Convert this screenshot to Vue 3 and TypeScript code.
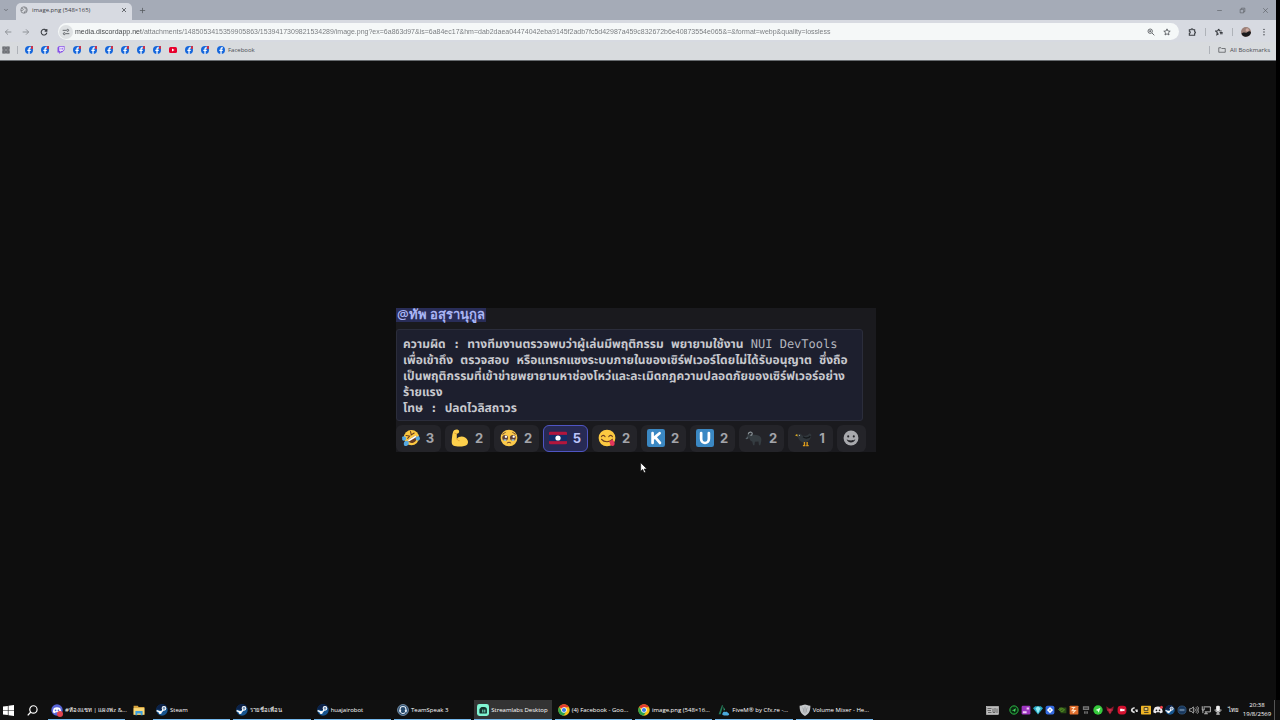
<script setup lang="ts">
import { ref } from 'vue'

interface Reaction { icon: string; count: number; mine?: boolean; name: string }
interface Task { icon: string; label: string; active?: boolean }

const url = ref('media.discordapp.net/attachments/1485053415359905863/1539417309821534289/image.png?ex=6a863d97&is=6a84ec17&hm=dab2daea04474042eba9145f2adb7fc5d42987a459c832672b6e40873554e065&=&format=webp&quality=lossless')

const bookmarks: string[] = ['fb', 'fb', 'twitch', 'fb', 'fb', 'fb', 'fb', 'fb', 'fb', 'yt', 'fb', 'fb']

const reactions: Reaction[] = [
  { icon: 'rofl', count: 3, name: 'rofl' },
  { icon: 'muscle', count: 2, name: 'muscle' },
  { icon: 'holding', count: 2, name: 'holding back tears' },
  { icon: 'laos', count: 5, mine: true, name: 'flag of Laos' },
  { icon: 'yum', count: 2, name: 'yum' },
  { icon: 'letter-k', count: 2, name: 'letter K' },
  { icon: 'letter-u', count: 2, name: 'letter U' },
  { icon: 'ox', count: 2, name: 'buffalo' },
  { icon: 'bird', count: 1, name: 'black bird' },
]

const tasks: Task[] = [
  { icon: 'steam', label: 'Steam' },
  { icon: 'steam', label: 'รายชื่อเพื่อน' },
  { icon: 'steam', label: 'huajairobot' },
  { icon: 'teamspeak', label: 'TeamSpeak 3' },
  { icon: 'streamlabs', label: 'Streamlabs Desktop', active: true },
  { icon: 'chrome', label: '(4) Facebook - Goo...' },
  { icon: 'chrome', label: 'image.png (548×16...' },
  { icon: 'fivem', label: 'FiveM® by Cfx.re -...' },
  { icon: 'mixer', label: 'Volume Mixer - He...' },
]

const tray: string[] = ['t-ring', 't-purple', 't-gem', 't-blue', 't-nvidia', 't-orange', 't-usb', 't-green', 't-red', 't-rec', 't-logi', 't-yellow', 't-discord', 'steam', 't-globe', 't-sound', 't-net', 't-mic']
</script>

<template>
  <svg class="sprites" aria-hidden="true">
    <defs>
      <symbol id="fb" viewBox="0 0 16 16"><circle cx="8" cy="8" r="8" fill="#1567dc" /><path d="M6.800 16V10.200H4.700V7.600h2.100V6.200c0-2.600 1.300-3.800 3.500-3.800.8 0 1.300.1 1.600.2v2.200h-1.200c-1.100 0-1.400.5-1.400 1.500v1.300h2.500l-.5 2.600h-2V16z" fill="#fff" /></symbol>
      <symbol id="twitch" viewBox="0 0 16 16"><path d="M4 0 1 3v10h3.500v3l3-3H10l5-5V0z" fill="#8650e8" /><path d="M4.600 1.500h9v6l-2.500 2.500H8.500L6.200 12V10H4.600z" fill="#efe9fa" /><path d="M8 3.700v3.500M11 3.700v3.500" stroke="#8650e8" stroke-width="1.400" /></symbol>
      <symbol id="yt" viewBox="0 0 16 16"><rect y="2" width="16" height="12" rx="3" fill="#e8002d" /><path d="M6 5v6l5-3z" fill="#fff" /></symbol>
      <symbol id="rofl" viewBox="0 0 20 20"><circle cx="10.500" cy="9.500" r="8.500" fill="#fcc941" /><path d="M6.500 12.500 15.500 7c2 4-.2 7.500-3 8.300-2.500.8-5-.3-6-2.800z" fill="#673b20" /><path d="m6.500 12.500 9-5.500.6 2-8.400 5z" fill="#fff" /><path d="m4.500 7.200 4 .6-2.200 2.700M9.500 2.800l.8 3.700 3.200-2" stroke="#673b20" stroke-width="1.200" fill="none" stroke-linecap="round" /><path d="M0 9c2-2 5-.5 4.600 2C4.200 13 1 13.500.4 12.200-.2 11.300.6 10.600 0 9zM18.500 7.500c2 2 2 5-.5 5.400-2 .2-3.500-2-2.600-3.400.6-1 2-.8 3.100-2zM2 16c0-2 3-4 5-2 1.500 2-.5 5-2.500 5S2 18 2 16z" fill="#55a9e2" /></symbol>
      <symbol id="muscle" viewBox="0 0 20 20"><path d="M3.500 1.500c2-1.500 5-1 5.500.7.400 1.500-.8 3-2.600 3.200l.1 5.300c2-2.300 6-3.200 9.200-1.200 3 1.900 4.200 5.500 2.400 7.600-2.600 2.800-11.600 2.800-15.600 1.200C.2 17.200.7 13 1.200 9c.4-3.200.8-6.500 2.300-7.500z" fill="#fdd04c" /><path d="M6.500 10.700c.4 1.500 1.500 2.400 3 2.300M3.700 4.500l2.700.9" stroke="#df9833" stroke-width="1" fill="none" /></symbol>
      <symbol id="holding" viewBox="0 0 20 20"><circle cx="10" cy="10" r="9.300" fill="#fbca4b" /><circle cx="5.700" cy="9.800" r="3.200" fill="#5d4038" /><circle cx="14.300" cy="9.800" r="3.200" fill="#5d4038" /><circle cx="6.600" cy="8.500" r="1.300" fill="#fff" /><circle cx="15.200" cy="8.500" r="1.300" fill="#fff" /><path d="M3.500 12c1.300-.8 3-.8 4.200 0-1 1.600-3.200 1.600-4.200 0zm8.800 0c1.300-.8 3-.8 4.200 0-1 1.600-3.200 1.600-4.200 0z" fill="#a9d5ec" /><path d="M8 15.500c1-1.100 3-1.100 4 0M3 5.700c1-.3 2.500-1 3-2M17 5.700c-1-.3-2.500-1-3-2" stroke="#68402c" stroke-width="1.100" fill="none" stroke-linecap="round" /></symbol>
      <symbol id="laos" viewBox="0 0 20 20"><rect y="3" width="20" height="14" rx="1.500" fill="#b3163c" /><rect y="6.500" width="20" height="7" fill="#132d68" /><circle cx="10" cy="10" r="2.900" fill="#fff" /></symbol>
      <symbol id="yum" viewBox="0 0 20 20"><circle cx="10" cy="10" r="9.300" fill="#fcc941" /><path d="M3.800 8.500c.8-2 3.200-2 4 0M12 8.500c.8-2 3.200-2 4 0M4 11.500c2.500 3.500 9.500 3.500 12 0" fill="none" stroke="#6d3f22" stroke-width="1.300" stroke-linecap="round" /><path d="M12.500 13.500c1.500-.2 3-1 3.500-1.700 1.500 1.600 3.500 4 2 6.200-1.200 1.600-4 1-4.500-1z" fill="#e4375a" /></symbol>
      <symbol id="letter-k" viewBox="0 0 20 20"><rect width="20" height="20" rx="2.500" fill="#3b88c3" /><path d="M6.200 4.500v11M14 4.700 6.500 11M9 9l5.400 6.500" stroke="#fff" stroke-width="3" fill="none" stroke-linecap="round" /></symbol>
      <symbol id="letter-u" viewBox="0 0 20 20"><rect width="20" height="20" rx="2.500" fill="#3b88c3" /><path d="M5.700 4.500v6.200c0 6.500 8.600 6.500 8.600 0V4.500" stroke="#fff" stroke-width="3" fill="none" stroke-linecap="round" /></symbol>
      <symbol id="ox" viewBox="0 0 20 20"><path d="M2 8c1-2 3-2.500 5-1.500 3.500-.3 7 .2 9.500 1.500 2 1.500 1.800 4 1.500 6l-1 4h-1.500l-.5-4-4 .3-.5 3.700H9L8 14c-2.200-.6-3-2.300-3.300-4.200L2 10.500z" fill="#353c41" /><path d="M3.500 6C4 3 8 2.500 8 5.200 8 6.300 7.200 7 6 7" fill="none" stroke="#8d969b" stroke-width="1.300" /><path d="M.5 10.500 3 8.500l.8 2-2.300 1z" fill="#59636a" /></symbol>
      <symbol id="bird" viewBox="0 0 20 20"><path d="M2.500 7.500C3 4.500 7 4.500 7.800 7.200c3 .8 6.200.4 8-2.200 1.800-.2 2.700 1 2.200 2.800-.5 4-4 7.500-8 7.200C5.500 14.500 4 11 2.500 7.500z" fill="#30363b" /><path d="M9 8.500c3 2.500 6.500 1.500 8-.7" stroke="#15181b" stroke-width="1.500" fill="none" /><path d="m0 7 2.500-1.500.4 2.700z" fill="#e5b322" /><path d="M10.500 14.500V18m3-3.500V18M8.800 18.400h2.800m.8 0h2.800" stroke="#dc9c1c" stroke-width="1.500" fill="none" /><circle cx="5" cy="7" r=".7" fill="#aeb4b8" /></symbol>
      <symbol id="smile" viewBox="0 0 20 20"><circle cx="10" cy="10" r="9.300" fill="#a8a9ad" /><circle cx="6.500" cy="8" r="1.300" fill="#242429" /><circle cx="13.500" cy="8" r="1.300" fill="#242429" /><path d="M4.500 11.500c2 5.300 9 5.300 11 0-3 2-8 2-11 0z" fill="#242429" /></symbol>
      <symbol id="steam" viewBox="0 0 20 20"><circle cx="10" cy="10" r="9.500" fill="#17558f" /><path d="M.5 9a9.500 9.500 0 0 1 18-3.400L10 10z" fill="#0b2148" /><path d="m1 11 5.500 2.300 3-.6 3-3.700" stroke="#fff" stroke-width="2.400" fill="none" /><circle cx="13.300" cy="7.200" r="3.100" fill="#7794b4" stroke="#fff" stroke-width="1.700" /><circle cx="7" cy="14" r="2.500" fill="#fff" /></symbol>
      <symbol id="teamspeak" viewBox="0 0 20 20"><circle cx="10" cy="10" r="9" fill="#24476a" stroke="#8ba4bc" stroke-width="1.400" /><path d="M5 11V9c0-6.500 10-6.500 10 0v2M6 13.500c1 2.500 5 3 7.500 1" stroke="#e7eef5" stroke-width="1.700" fill="none" /><rect x="3.700" y="9" width="3" height="5" rx="1.400" fill="#e7eef5" /><rect x="13.300" y="9" width="3" height="5" rx="1.400" fill="#e7eef5" /></symbol>
      <symbol id="streamlabs" viewBox="0 0 20 20"><rect width="20" height="20" rx="4" fill="#80f5d2" /><path d="M4 14.500V9.500c0-3 1.500-4.500 4.500-4.500H12c3 0 4.500 1.500 4.500 4.500v5c0 1-.5 1.500-1.500 1.500H5.500C4.500 16 4 15.500 4 14.500z" fill="#14332d" /><path d="M9.700 10v3.500M13 10v3.500" stroke="#80f5d2" stroke-width="1.600" stroke-linecap="round" /><path d="M4 8 6 5.500" stroke="#80f5d2" stroke-width="1.500" /></symbol>
      <symbol id="chrome" viewBox="0 0 20 20"><circle cx="10" cy="10" r="9.500" fill="#fbc116" /><path d="M10 10 1.800 5.200A9.500 9.500 0 0 1 18.200 5.300H10z" fill="#e33b2e" /><path d="M1.800 5.200A9.500 9.500 0 0 0 9.500 19.500L13.800 12 10 10 6 12z" fill="#2da44e" /><circle cx="10" cy="10" r="4.600" fill="#fff" /><circle cx="10" cy="10" r="3.500" fill="#3a7de8" /></symbol>
      <symbol id="fivem" viewBox="0 0 20 20"><path d="M1 17 6.500 2H8.500L4.500 17z" fill="#237b58" /><path d="m9 4 3 6-2.500 1z" fill="#31a476" /><path d="M8 15c0-2 3-3 4-1.500 2-1.500 4.500 0 4.500 1.500 3 .5 2.500 4 0 4h-6.500C7 19 6 16 8 15z" fill="#4aa9dc" /></symbol>
      <symbol id="mixer" viewBox="0 0 20 20"><path d="M1 3c5 0 7-2 9-2s4 2 9 2c0 8-1.500 13-9 17C2.500 16 1 11 1 3z" fill="#c5c8cb" /><path d="M10 4v12M6 6c2 3 2 5 1 8M14 6c-2 3-2 5-1 8" fill="none" stroke="#94989c" stroke-width="1.200" /></symbol>
      <symbol id="discord" viewBox="0 0 20 20"><circle cx="10" cy="10" r="9.500" fill="#5865d8" /><path d="M5 6.500c3-1.700 7-1.700 10 0 1.500 2.500 2 5 1.800 7.300-1.200 1-2.400 1.400-3.600 1.600l-.8-1.500H7.600l-.8 1.500c-1.200-.2-2.400-.6-3.600-1.600C3 11.500 3.500 9 5 6.500z" fill="#fff" /><circle cx="7.600" cy="10.500" r="1.400" fill="#5865d8" /><circle cx="12.400" cy="10.500" r="1.400" fill="#5865d8" /></symbol>
      <symbol id="explorer" viewBox="0 0 20 18"><path d="M1 1h7l1.500 2H19v13H1z" fill="#d6a33e" /><path d="M1 5h18v11H1z" fill="#fad978" /><path d="M4 10h12v7h-3v-3H7v3H4z" fill="#3e9fdd" /></symbol>
      <symbol id="keyboard" viewBox="0 0 26 18"><rect x="1" y="1" width="24" height="16" fill="#bdbdbd" stroke="#e0e0e0" /><path d="M3 5h8M3 9h7M4 13h7M14 5v8h4V4m4 1v9" stroke="#4a4a4a" stroke-width="1.500" fill="none" /></symbol>
      <symbol id="t-ring" viewBox="0 0 16 16"><circle cx="8" cy="8" r="6.600" fill="#092a11" stroke="#2dbf48" stroke-width="1.600" /><path d="m4.500 9 6.500-4-1.500 6.500L8 9z" fill="#45dd61" /></symbol>
      <symbol id="t-purple" viewBox="0 0 16 16"><rect x="1" y="1" width="14" height="14" rx="2" fill="#9d35bf" /><path d="M3 10h6v3H3zM9 4h4v3H9z" fill="#efccf5" /></symbol>
      <symbol id="t-gem" viewBox="0 0 16 16"><path d="M0 5 3.500 2h9L16 5l-8 10z" fill="#26a9c6" /><path d="m4 5 4 9 4-9-4-3z" fill="#93edf4" /></symbol>
      <symbol id="t-blue" viewBox="0 0 16 16"><rect x="1" y="1" width="14" height="14" rx="3" fill="#356be1" /><path d="m8 3 5 5-5 5-5-5z" fill="#fff" /><circle cx="8" cy="8" r="1.300" fill="#356be1" /></symbol>
      <symbol id="t-nvidia" viewBox="0 0 16 16"><path d="M3 4h12v9H6z" fill="#284a16" /><path d="M2 8c3-4 7-4 10 0-3 3-6 3-8 0 2-1.500 4-1.500 5 0" stroke="#66a52b" stroke-width="1.300" fill="none" /></symbol>
      <symbol id="t-orange" viewBox="0 0 16 16"><rect x="1" y="1" width="14" height="14" rx="1" fill="#df6d2c" /><path d="M4 4h6M8 5l-3 4h5l-4 4" stroke="#ffe1c5" stroke-width="1.800" fill="none" /></symbol>
      <symbol id="t-usb" viewBox="0 0 16 16"><path d="M3 2h10v6H3zM5 10h6v4H5z" fill="#777" /><path d="M5 5h6M8 9v6" stroke="#202020" stroke-width="1.500" /></symbol>
      <symbol id="t-green" viewBox="0 0 16 16"><circle cx="8" cy="8" r="7.500" fill="#35ca3c" /><path d="m4 8 8-3.500-3 8L7.500 9z" fill="#e4ffe5" /></symbol>
      <symbol id="t-red" viewBox="0 0 16 16"><path d="m2 2 6 4 6-4-1 6-5 7-5-7z" fill="#8d172c" /><path d="M4 8h8M8 6v7" stroke="#de3951" stroke-width="1.500" /></symbol>
      <symbol id="t-rec" viewBox="0 0 16 16"><rect x="1" y="1" width="14" height="14" rx="5" fill="#d4112f" /><path d="M5 6h4v1l3-1v4l-3-1v1H5z" fill="#fff" /></symbol>
      <symbol id="t-logi" viewBox="0 0 16 16"><path d="M9 3C1 4 1 12 9 13v-3c-4 0-4-4 0-4zM10 7h4v4h-3V9h-1z" fill="#ddd" /></symbol>
      <symbol id="t-yellow" viewBox="0 0 16 16"><rect x="0" y="1" width="16" height="14" rx="1" fill="#edb425" /><path d="M5 4h6v5H5zM5 12h7" stroke="#3b3526" stroke-width="1.400" fill="#e9c86f" /></symbol>
      <symbol id="t-discord" viewBox="0 0 16 16"><path d="M3 3.500c3-1.500 7-1.500 10 0 2 3 2.500 6 2.500 8-1.500 1.300-3 1.700-4 1.800l-1-1.600h-5l-1 1.600c-1-.1-2.500-.5-4-1.800 0-2 .5-5 2.500-8z" fill="#ece9ed" /><circle cx="5.500" cy="8.500" r="1.400" fill="#171717" /><circle cx="10.500" cy="8.500" r="1.400" fill="#171717" /><circle cx="13.500" cy="3.500" r="2.400" fill="#ee3f4b" /></symbol>
      <symbol id="t-globe" viewBox="0 0 16 16"><circle cx="8" cy="8" r="6.500" fill="#17375d" stroke="#3e6892" /><path d="M4 7h8M4 9h8" stroke="#8ba6c2" stroke-width="1.100" /></symbol>
      <symbol id="t-sound" viewBox="0 0 16 16"><path d="M1 6h2.500L7 3v10L3.500 10H1zM9 5.500c1.500 1.500 1.500 3.500 0 5M11 3.500c3 2.700 3 6.300 0 9M13 2c4 3.500 4 8.500 0 12" stroke="#ddd" stroke-width="1.100" fill="none" /></symbol>
      <symbol id="t-net" viewBox="0 0 16 16"><path d="M4 3h11v8H6M2 2v6h3V4M8 11v3m-3 0h6M3 8v5" stroke="#ddd" stroke-width="1.300" fill="none" /></symbol>
      <symbol id="t-mic" viewBox="0 0 16 16"><rect x="5" y="1" width="6" height="9" rx="2" fill="#eee" /><path d="M3.500 7v2c0 3 9 3 9 0V7M8 11v4M5 14.500h6" stroke="#eee" stroke-width="1.500" fill="none" /></symbol>
    </defs>
  </svg>

  <div class="desktop">
    <div class="browser">
      <header class="tabs">
        <button class="icon-btn tab-search" aria-label="Search tabs"><svg viewBox="0 0 12 12"><path d="m2.500 4 3.500 3.500L9.500 4" /></svg></button>
        <div class="tab">
          <svg class="favicon" viewBox="0 0 16 16"><circle cx="8" cy="8" r="6.500" fill="#d5d7dc" stroke="#6d7075" stroke-width="1.400" /><path d="M3 4.500c3 .5 4 1.500 3.500 3S3.500 9 2 9m8-7c-1 2 0 3.500 2 4l2 .3M9 14c-1-3 1-4.500 5-4" stroke="#6d7075" stroke-width="1.500" fill="none" /></svg>
          <span class="tab-title">image.png (548×165)</span>
          <button class="icon-btn" aria-label="Close tab"><svg viewBox="0 0 12 12"><path d="m3 3 6 6m0-6-6 6" /></svg></button>
        </div>
        <button class="icon-btn new-tab" aria-label="New tab"><svg viewBox="0 0 12 12"><path d="M6 1.500v9M1.500 6h9" /></svg></button>
        <div class="window-controls">
          <button class="icon-btn" aria-label="Minimize"><svg viewBox="0 0 12 12"><path d="M2 6h8" /></svg></button>
          <button class="icon-btn" aria-label="Restore"><svg viewBox="0 0 12 12"><path d="M2 4h6v6H2zM4 4V2h6v6H8" /></svg></button>
          <button class="icon-btn" aria-label="Close"><svg viewBox="0 0 12 12"><path d="m2 2 8 8m0-8-8 8" /></svg></button>
        </div>
      </header>

      <div class="toolbar">
        <button class="icon-btn faded" aria-label="Back"><svg viewBox="0 0 12 12"><path d="M11 6H2m4-4L2 6l4 4" /></svg></button>
        <button class="icon-btn faded" aria-label="Forward"><svg viewBox="0 0 12 12"><path d="M1 6h9M6 2l4 4-4 4" /></svg></button>
        <button class="icon-btn bold" aria-label="Reload"><svg viewBox="0 0 12 12"><path d="M10 4.500A4.300 4.300 0 1 0 10.300 7M10.300 1.500v3.200H7" /></svg></button>
        <div class="omnibox">
          <button class="icon-btn site-info" aria-label="Site information"><svg viewBox="0 0 12 12"><path d="M1 3.500h5M6 8.500h5" /><circle cx="8.500" cy="3.500" r="1.500" /><circle cx="3.500" cy="8.500" r="1.500" /></svg></button>
          <input v-model="url" class="url" type="text" aria-label="Address" spellcheck="false" />
          <button class="icon-btn" aria-label="Zoom"><svg viewBox="0 0 12 12"><circle cx="4.800" cy="4.800" r="3.300" /><path d="m7.500 7.500 3.500 3.500M3.300 4.800h3M4.800 3.300v3" /></svg></button>
          <button class="icon-btn" aria-label="Bookmark this page"><svg viewBox="0 0 12 12"><path d="m6 1.300 1.400 3.200 3.400.3-2.600 2.300.8 3.400L6 8.700l-3 1.800.8-3.400-2.600-2.300 3.400-.3z" /></svg></button>
        </div>
        <div class="toolbar-end">
          <button class="icon-btn bold" aria-label="Extensions"><svg viewBox="0 0 12 12"><path d="M2 2.500h2.500c0-2 3-2 3 0H10v3c1.600 0 1.600 2.500 0 2.500v3H2V8c2 0 2-3 0-3z" /></svg></button>
          <span class="sep"></span>
          <button class="icon-btn bold" aria-label="Favorites"><svg viewBox="0 0 12 12"><path d="m5.500 1.500 1.300 2.700 3.200.4M5.500 1.500 4.200 4.200l-3.200.4 2.400 2.200-.6 3.400L5.500 8.700M7 6.800h4.500M7.500 8.700h4" /></svg></button>
          <span class="sep"></span>
          <button class="icon-btn" aria-label="Profile"><svg class="avatar" viewBox="0 0 12 12"><circle cx="6" cy="6" r="6" fill="#9c8078" stroke="none" /><path d="M.5 8C3 5 5 7.500 7 6.500s3-2 5-.5a6 6 0 0 1-11.500 2z" fill="#19191b" stroke="none" /><circle cx="7.500" cy="3.500" r="2" fill="#d0aaa0" stroke="none" /></svg></button>
          <button class="icon-btn menu bold" aria-label="Menu"><svg viewBox="0 0 12 12"><path class="dots" d="M6 2v.1M6 6v.1M6 10v.1" /></svg></button>
        </div>
      </div>

      <nav class="bookmarks" aria-label="Bookmarks">
        <button class="icon-btn apps" aria-label="Apps"><svg viewBox="0 0 12 12"><path d="M1.500 1.500h3.300v3.300H1.500zM7.200 1.500h3.300v3.300H7.200zM1.500 7.200h3.300v3.300H1.500zM7.200 7.200h3.300v3.300H7.200z" /></svg></button>
        <span class="sep"></span>
        <a v-for="(b, i) in bookmarks" :key="i" class="bookmark" href="#" :aria-label="'Bookmark ' + (i + 1)"><svg><use :href="'#' + b" /></svg><i v-if="b === 'fb'" class="badge"></i></a>
        <a class="bookmark named" href="#"><svg><use href="#fb" /></svg><span>Facebook</span></a>
        <button class="all-bookmarks"><svg viewBox="0 0 16 12"><path d="M1.500 1.500h4.500l1.500 1.500h7v7.500h-13z" /></svg>All Bookmarks</button>
      </nav>

      <main class="viewport">
        <section class="shot">
          <div class="mention-row"><a class="mention" href="#">@ทัพ อสุรานุกูล</a></div>
          <div class="code">
            <p>ความผิด : ทางทีมงานตรวจพบว่าผู้เล่นมีพฤติกรรม พยายามใช้งาน <span class="latin">NUI DevTools</span></p>
            <p>เพื่อเข้าถึง ตรวจสอบ หรือแทรกแซงระบบภายในของเซิร์ฟเวอร์โดยไม่ได้รับอนุญาต ซึ่งถือ</p>
            <p>เป็นพฤติกรรมที่เข้าข่ายพยายามหาช่องโหว่และละเมิดกฎความปลอดภัยของเซิร์ฟเวอร์อย่าง</p>
            <p>ร้ายแรง</p>
            <p>โทษ : ปลดไวลิสถาวร</p>
          </div>
          <div class="reactions">
            <button v-for="r in reactions" :key="r.icon" class="reaction" :class="{ mine: r.mine }" :title="r.name"><svg><use :href="'#' + r.icon" /></svg><span>{{ r.count }}</span></button>
            <button class="reaction add" aria-label="Add reaction"><svg><use href="#smile" /></svg></button>
          </div>
        </section>
        <svg class="cursor" viewBox="0 0 12 18"><path d="M1 1v13l3-2.800L6.200 16l2.300-1-2.200-4.500h4.200z" fill="#fff" stroke="#111" /></svg>
      </main>
    </div>

    <footer class="taskbar">
      <button class="start" aria-label="Start"><svg viewBox="0 0 12 12"><path d="M0 1.700 5.300 1v4.700H0zM6 .9 12 0v5.700H6zM0 6.400h5.300V11L0 10.300zM6 6.400h6V12l-6-.9z" fill="#fff" /></svg></button>
      <button class="start" aria-label="Search"><svg viewBox="0 0 12 12"><circle cx="7" cy="4.800" r="4" fill="none" stroke="#fff" stroke-width="1.300" /><path d="M4.200 7.600.8 11.300" stroke="#fff" stroke-width="1.400" /></svg></button>
      <button class="task discord-task"><svg><use href="#discord" /></svg><i class="task-badge"></i><span>#ห้องแชท | แผงพz &amp;...</span></button>
      <button class="explorer" aria-label="File Explorer"><svg><use href="#explorer" /></svg></button>
      <div class="tasks">
        <button v-for="t in tasks" :key="t.label" class="task" :class="{ active: t.active }"><svg><use :href="'#' + t.icon" /></svg><span>{{ t.label }}</span></button>
      </div>
      <div class="tray">
        <svg class="keyboard"><use href="#keyboard" /></svg>
        <svg v-for="t in tray" :key="t" class="tray-icon"><use :href="'#' + t" /></svg>
        <span class="lang">ไทย</span>
        <div class="clock"><span>20:38</span><span>19/8/2569</span></div>
      </div>
    </footer>
  </div>
</template>

<style>
body { margin: 0; background: #000; }
</style>

<style scoped>
* { box-sizing: border-box; }
.sprites { position: absolute; width: 0; height: 0; }
.desktop { display: flex; flex-direction: column; height: 100vh; overflow: hidden; background: #000; font-family: "Open Sans", "Noto Sans", sans-serif; font-size: 6px; }
button { border: 0; padding: 0; margin: 0; background: none; font: inherit; color: inherit; }
a { color: inherit; text-decoration: none; }
svg { display: block; flex: none; }
.browser { flex: 1; display: flex; flex-direction: column; min-height: 0; margin-right: 4px; color: #4a4d52; }
.icon-btn { display: grid; place-items: center; flex: none; width: 16px; height: 16px; color: #55585d; }
.icon-btn svg { width: 8px; height: 8px; fill: none; stroke: currentColor; stroke-width: 1.3; }
.icon-btn.bold { color: #383b40; }
.icon-btn.bold svg { stroke-width: 1.6; }
.icon-btn.faded { color: #85898f; }
.tabs { display: flex; align-items: center; height: 20px; background: #a5abb7; }
.tab-search { width: 12px; }
.tab-search svg { width: 6px; height: 6px; }
.tab { display: flex; align-items: center; align-self: flex-end; width: 116px; height: 17px; margin-left: 4px; padding-left: 4px; padding-bottom: 3px; border-radius: 5px 5px 0 0; background: #d7dae1; color: #3d4045; }
.tab .favicon { width: 8px; height: 8px; margin-right: 4px; }
.tab-title { flex: 1; }
.new-tab svg { width: 7px; height: 7px; }
.new-tab { margin-left: 2px; }
.window-controls { display: flex; gap: 7px; margin-left: auto; margin-right: 3px; }
.window-controls svg { width: 7px; height: 7px; stroke-width: 1; }
.toolbar { display: flex; align-items: center; gap: 2px; height: 22px; padding-top: 1px; background: #d7dae1; }
.omnibox { flex: 1; display: flex; align-items: center; height: 17px; margin-left: 4px; padding-right: 4px; border-radius: 9px; background: #f5f8f8; }
.site-info { width: 14px; height: 14px; margin: 0 2px 0 1px; border-radius: 50%; background: #dee1e3; }
.url { flex: 1; min-width: 0; height: 15px; padding: 0; border: 0; outline: 0; font-family: "Liberation Sans", sans-serif; font-size: 7px; color: #74777b; background: linear-gradient(to right, #3e4145 66px, #74777b 66px); background-clip: text; -webkit-background-clip: text; -webkit-text-fill-color: transparent; }
.toolbar-end { display: flex; align-items: center; gap: 5px; margin-left: 3px; margin-right: 7px; }
.menu { width: 10px; }
.sep { width: 1px; height: 8px; background: #aeb2b8; }
.avatar.avatar { width: 10px; height: 10px; }
.dots { stroke-width: 2; stroke-linecap: round; }
.bookmarks { display: flex; align-items: center; height: 19px; padding-bottom: 2px; border-bottom: 1px solid #686c70; background: #d8dbde; }
.apps { width: 12px; }
.apps svg { stroke-width: 1.8; }
.bookmarks .sep { margin-left: 5px; margin-right: 7px; }
.bookmark { position: relative; display: flex; align-items: center; width: 16px; }
.bookmark svg { width: 8px; height: 8px; }
.badge { position: absolute; top: 0; left: 6px; width: 2px; height: 3px; background: #c8334d; }
.named { width: auto; gap: 3px; }
.all-bookmarks { display: flex; align-items: center; gap: 4px; margin-left: auto; margin-right: 6px; padding-left: 8px; border-left: 1px solid #aeb2b8; }
.all-bookmarks svg { width: 8px; height: 6px; fill: none; stroke: currentColor; stroke-width: 1.4; }
.viewport { position: relative; flex: 1; display: flex; align-items: center; justify-content: center; min-height: 0; padding-bottom: 1px; background: #0e0e0e; }
.shot { width: 480px; margin-right: 4px; background: #1a1a1e; }
.mention-row { height: 21px; }
.mention { display: inline-block; height: 14px; padding: 0 1px; background: #292d58; color: #a9b5f5; font-size: 13px; font-weight: 600; line-height: 12px; }
.code { width: 467px; padding: 6px 6px 4px; border: 1px solid #2b2d3b; border-radius: 3px; background: #1d1f2e; color: #c8c9cf; font-family: "DejaVu Sans Mono", "Noto Sans Thai", Loma, Garuda, monospace; font-size: 12px; font-weight: 700; line-height: 16px; white-space: nowrap; text-rendering: geometricPrecision; }
.code p { margin: 0; }
.latin { color: #b4b6be; font-weight: 400; }
.reactions { display: flex; gap: 4px; margin-top: 4px; }
.reaction { display: flex; align-items: center; justify-content: center; gap: 6px; width: 45px; height: 27px; padding: 0 1px 1px 0; border-radius: 6px; background: #242429; color: #a3a4aa; font-family: Inter, sans-serif; font-size: 13px; font-weight: 700; }
.reaction svg { width: 18px; height: 18px; }
.reaction.mine { border: 1px solid #4f55c3; background: #272a54; color: #bcc4fb; }
.reaction.add { width: 29px; }
.reaction.add svg { width: 16px; height: 16px; }
.cursor { position: absolute; left: 640px; top: 401px; width: 8px; height: 12px; }
.taskbar { display: flex; align-items: stretch; height: 20px; background: #101010; color: #fff; }
.start { display: grid; place-items: center; width: 16px; margin-right: 8px; }
.start svg { width: 11px; height: 11px; }
.task { position: relative; display: flex; align-items: center; gap: 2px; min-width: 0; padding: 0 3px; border-bottom: 1px solid #76b9ed; white-space: nowrap; text-align: left; }
.task svg { width: 12px; height: 12px; }
.task.active { background: #333; }
.discord-task { width: 77px; }
.task-badge { position: absolute; left: 9px; top: 11px; width: 6px; height: 6px; border-radius: 50%; background: #e04350; }
.explorer { display: grid; place-items: center; width: 28px; }
.explorer svg { width: 12px; height: 11px; }
.tasks { display: grid; grid-template-columns: repeat(9, 1fr); gap: 3px; width: 720px; }
.tray { display: flex; align-items: center; gap: 2px; margin-left: auto; margin-right: 5px; padding-right: 3px; border-right: 1px solid #555; }
.tray-icon { width: 10px; height: 10px; }
.keyboard { width: 13px; height: 9px; margin-right: 8px; }
.lang { width: 16px; text-align: center; }
.clock { display: flex; flex-direction: column; align-items: center; width: 28px; line-height: 9px; }
</style>
